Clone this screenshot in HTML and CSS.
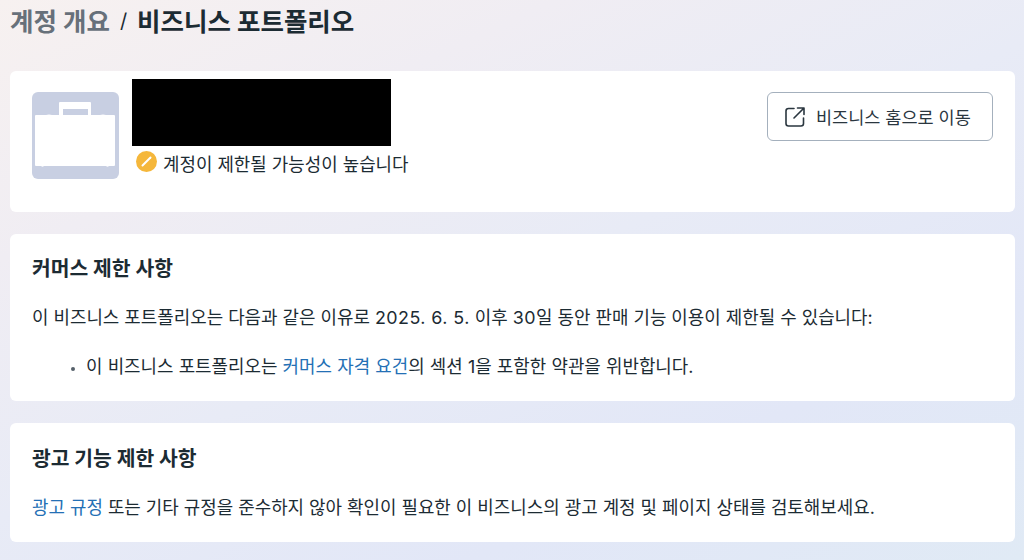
FILE: index.html
```html
<!DOCTYPE html>
<html lang="ko">
  <head>
    <meta charset="UTF-8" />
    <meta name="viewport" content="width=device-width, initial-scale=1.0" />
    <title>비즈니스 포트폴리오</title>
    <link rel="stylesheet" href="styles.css">
  </head>
  <body>
    <div class="page">
      <header class="crumbs">
        <span class="crumbParent">계정 개요</span>
        <span class="crumbSep">/</span>
        <span class="crumbCurrent">비즈니스 포트폴리오</span>
      </header>

      <section class="card profileCard">
        <div class="avatar">
          <svg width="87" height="87" viewBox="0 0 87 87">
            <path d="M27 23 V11 Q27 10 28 10 H58 Q59 10 59 11 V23 H56 V17 H31 V23 Z" fill="#fff" />
            <path d="M3 24 Q3 23 4 23 H14 Q17 22 20 23 H68 Q71 22 74 23 H82 Q83 23 83 24 V73 Q83 74 82 74 H77 Q75.5 75.5 74 74 H12 Q10.5 75.5 9 74 H4 Q3 74 3 73 Z" fill="#fff" />
          </svg>
        </div>
        <div class="profileInfo">
          <div class="redacted"></div>
          <div class="status">
            <svg class="statusIcon" width="21" height="21" viewBox="0 0 21 21">
              <circle cx="10.5" cy="10.5" r="10.5" fill="#f5b73b" />
              <path d="M6.5 14.5 L14.5 6.5" stroke="#fff" stroke-width="2" stroke-linecap="round" />
            </svg>
            <span class="statusText">계정이 제한될 가능성이 높습니다</span>
          </div>
        </div>
        <button class="homeButton">
          <svg width="20" height="20" viewBox="0 0 20 20" fill="none" stroke="#2a363f" stroke-width="1.6" stroke-linecap="round" stroke-linejoin="round">
            <path d="M9 1.5 H3.5 Q1 1.5 1 4 V16.5 Q1 19 3.5 19 H16 Q18.5 19 18.5 16.5 V11" />
            <path d="M9 11 L19 1 M12.5 1 H19 V7.5" />
          </svg>
          <span>비즈니스 홈으로 이동</span>
        </button>
      </section>

      <section class="card textCard commerceCard">
        <h2 class="cardTitle">커머스 제한 사항</h2>
        <p class="cardText">이 비즈니스 포트폴리오는 다음과 같은 이유로 <span class="date">2025. 6. 5.</span> 이후 <span class="date">30</span>일 동안 판매 기능 이용이 제한될 수 있습니다:</p>
        <ul class="reasonList">
          <li>이 비즈니스 포트폴리오는 <a href="#">커머스 자격 요건</a>의 섹션 1을 포함한 약관을 위반합니다.</li>
        </ul>
      </section>

      <section class="card textCard adsCard">
        <h2 class="cardTitle">광고 기능 제한 사항</h2>
        <p class="cardText"><a href="#">광고 규정</a> 또는 기타 규정을 준수하지 않아 확인이 필요한 이 비즈니스의 광고 계정 및 페이지 상태를 검토해보세요.</p>
      </section>
    </div>
  </body>
</html>
```

FILE: styles.css
```css
html,
body {
  margin: 0;
  height: 100%;
  overflow: hidden;
}

body {
  font-family: "Inter", "Noto Sans CJK KR", sans-serif;
  color: #1c2b33;
  background: linear-gradient(155deg, #f7f1f0 0%, #f0edf3 25%, #e8ebf6 50%, #e2e7f7 75%, #e0eaf5 100%);
}

.page {
  display: flex;
  flex-direction: column;
  gap: 22px;
  padding: 0 9px 0 10px;
}

.crumbs {
  display: flex;
  align-items: flex-start;
  height: 49px;
  font-size: 25.5px;
  font-weight: 700;
  line-height: 43px;
}

.crumbParent {
  color: #67707a;
}

.crumbSep {
  margin: 0 10px;
  font-size: 20px;
  font-weight: 400;
}

.card {
  background: #fff;
  border-radius: 6px;
}

.profileCard {
  display: flex;
  align-items: flex-start;
  height: 141px;
  box-sizing: border-box;
  padding: 8px 22px 0;
}

.avatar {
  width: 87px;
  height: 87px;
  margin-top: 13px;
  margin-right: 13px;
  border-radius: 6px;
  background: #c8cfe2;
  flex-shrink: 0;
}

.avatar svg {
  display: block;
}

.profileInfo {
  flex: 1;
}

.redacted {
  width: 258.5px;
  height: 67px;
  background: #000;
}

.status {
  display: flex;
  align-items: flex-start;
  gap: 6px;
  margin-top: 4px;
  padding-left: 4px;
  font-size: 17.9px;
  line-height: 26px;
}

.statusIcon {
  margin-top: 1px;
}

.statusText {
  margin-top: 2px;
}

.homeButton {
  display: flex;
  align-items: center;
  gap: 11px;
  width: 226px;
  height: 49px;
  margin-top: 13px;
  padding: 0 17px;
  font-family: inherit;
  font-size: 17.5px;
  color: #2a363f;
  background: #fff;
  border: 1px solid #a4b0bd;
  border-radius: 6px;
}

.textCard {
  box-sizing: border-box;
  padding: 20px 22px 0;
}

.commerceCard {
  height: 167px;
}

.adsCard {
  height: 119px;
  padding-top: 21px;
}

.cardTitle {
  margin: 0;
  font-size: 20.4px;
  font-weight: 700;
  line-height: 30px;
}

.cardText {
  margin: 21px 0 0;
  font-size: 17.9px;
  line-height: 26px;
}

.date {
  letter-spacing: 0.45px;
}

.reasonList {
  margin: 23px 0 0;
  padding-left: 54px;
  font-size: 17.9px;
  line-height: 26px;
  word-spacing: 0.15px;
}

.reasonList li::marker {
  font-size: 12px;
  color: #55606a;
}

a {
  color: #2470b5;
  text-decoration: none;
}
```
